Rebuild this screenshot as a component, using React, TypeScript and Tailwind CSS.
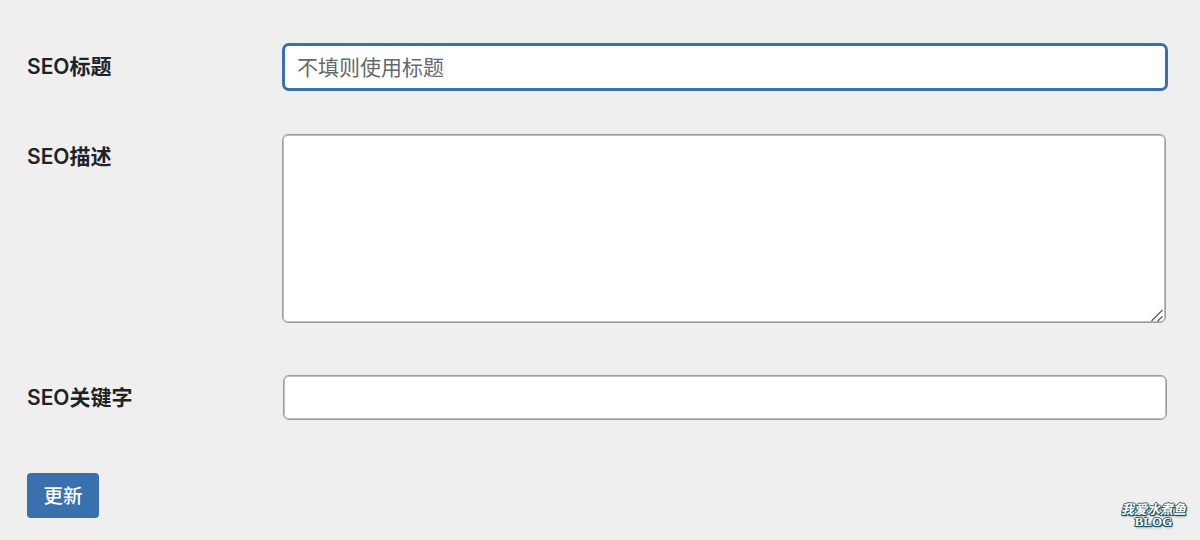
import React from 'react'

interface FieldProps {
  label: string
  htmlFor: string
  className?: string
  labelClassName?: string
  children: React.ReactNode
}

const Field: React.FC<FieldProps> = ({ label, htmlFor, className, labelClassName, children }) => {
  return (
    <div className={`flex items-start ${className ?? ''}`}>
      <label
        htmlFor={htmlFor}
        className={`w-[255px] shrink-0 text-[21px] leading-[30px] font-semibold text-[#1d2327] ${labelClassName ?? 'pt-[9px]'}`}
      >
        {label}
      </label>
      {children}
    </div>
  )
}

const ResizeGrip = () => (
  <svg className="absolute right-[2px] bottom-px" width="13" height="13" viewBox="0 0 13 13" fill="none">
    <path d="M0.5 12L11.5 1M6.5 12.3L11.5 7.3" stroke="#5f6062" strokeWidth="1.4" />
  </svg>
)

const Watermark = () => (
  <div className="absolute top-[502px] left-[1118px] flex w-[71px] flex-col items-center font-bold whitespace-nowrap text-white">
    <span className="font-['Noto_Sans_CJK_SC',sans-serif] text-[13px] leading-[14px] italic [text-shadow:1px_1px_0_#174f5c,-1px_0_0_#2f6672,0_-1px_0_#2f6672,1px_0_0_#2f6672,-1px_1px_0_#174f5c,1px_2px_2px_#999]">
      我爱水煮鱼
    </span>
    <span className="font-['Liberation_Serif',serif] text-[13px] leading-[11px] [text-shadow:1px_1px_0_#174f5c,-1px_0_0_#2f6672,0_-1px_0_#2f6672,1px_0_0_#2f6672,-1px_1px_0_#174f5c,1px_2px_2px_#999]">
      BLOG
    </span>
  </div>
)

const App = () => {
  return (
    <div className="relative h-[540px] w-[1200px] overflow-hidden bg-[#efefef] pt-[43px] pl-[27px] font-['Inter','Noto_Sans_CJK_SC',sans-serif]">
      <Field label="SEO标题" htmlFor="seo-title">
        <input
          id="seo-title"
          type="text"
          placeholder="不填则使用标题"
          className="h-[48px] w-[886px] rounded-[7px] border-[3px] border-[#3871ae] bg-white px-[12px] text-[21px] text-[#2c3338] outline-none placeholder:text-[#646970]"
        />
      </Field>

      <Field label="SEO描述" htmlFor="seo-description" className="mt-[43px]" labelClassName="pt-[8px]">
        <div className="relative h-[189px] w-[884px]">
          <textarea
            id="seo-description"
            className="block h-full w-full resize-none rounded-[6px] border border-[#9c9da1] bg-white p-3 text-[21px] shadow-[inset_0_0_0_1px_#bdbdc0] outline-none"
          />
          <ResizeGrip />
        </div>
      </Field>

      <Field label="SEO关键字" htmlFor="seo-keywords" className="mt-[52px]" labelClassName="pt-[8px]">
        <input
          id="seo-keywords"
          type="text"
          className="ml-px h-[45px] w-[884px] rounded-[6px] border border-[#9c9da1] bg-white px-[12px] text-[21px] shadow-[inset_0_0_0_1px_#bdbdc0] outline-none"
        />
      </Field>

      <button
        type="button"
        className="mt-[52.5px] block h-[45px] w-[72px] rounded-[4px] bg-[#3871ae] pt-px text-[19.5px] leading-[45px] font-medium text-white"
      >
        更新
      </button>

      <Watermark />
    </div>
  )
}

export default App
